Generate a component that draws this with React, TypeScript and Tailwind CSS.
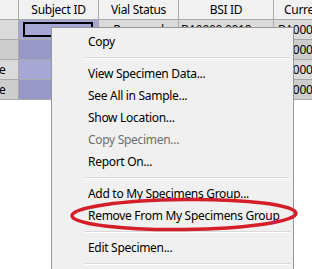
import React from "react";

const font = { fontFamily: '"Noto Sans", "Open Sans", sans-serif' };

function HeaderCell({ w, children, last }: { w: string; children?: React.ReactNode; last?: boolean }) {
  return (
    <div
      className={`${w} h-full flex items-center bg-[#f1f1f1] shrink-0 overflow-hidden whitespace-nowrap ${last ? "justify-start pl-[10px]" : "justify-center border-r border-[#a9a9a9]"}`}
    >
      {children}
    </div>
  );
}

const rows = [
  { first: "", vial: "Removed", bsi: "BA0000 0018", cur: "BA0000", light: true },
  { first: "", vial: "", bsi: "", cur: "BA0000", light: false },
  { first: "e", vial: "", bsi: "", cur: "BA0003", light: true },
  { first: "e", vial: "", bsi: "", cur: "BA0006", light: false },
];

function MenuItem({ children, disabled }: { children: React.ReactNode; disabled?: boolean }) {
  return (
    <div className={`h-[22px] flex items-center pl-[36px] whitespace-nowrap ${disabled ? "text-[#6d6d6d]" : "text-black"}`}>
      {children}
    </div>
  );
}

function Sep() {
  return (
    <div className="h-[10px] flex flex-col justify-center pl-[33px] pr-[3px]">
      <div className="h-px bg-[#d9d9d9]" />
      <div className="h-px bg-white" />
    </div>
  );
}

export default function App() {
  return (
    <div className="w-[312px] h-[269px] relative overflow-hidden bg-white text-[12px] tracking-[-0.3px] text-black" style={font}>
      {/* header */}
      <div className="flex h-[20px] border-b border-[#a9a9a9] w-[312px] overflow-hidden">
        <HeaderCell w="w-[19px]" />
        <HeaderCell w="w-[80px]">Subject ID</HeaderCell>
        <HeaderCell w="w-[80px]">Vial Status</HeaderCell>
        <HeaderCell w="w-[95px]">BSI ID</HeaderCell>
        <HeaderCell w="w-[38px]" last>Curre</HeaderCell>
      </div>
      {/* rows */}
      {rows.map((r, i) => (
        <div key={i} className="flex h-[20px] border-b border-[#a9a9a9] w-[312px] overflow-hidden">
          <div className={`w-[19px] shrink-0 border-r border-[#a9a9a9] flex items-center overflow-hidden ${r.light ? "bg-[#dadada]" : "bg-[#cdcdcd]"}`}>
            <span className="-ml-[1px]">{r.first}</span>
          </div>
          <div className={`w-[80px] shrink-0 border-r border-[#a9a9a9] relative ${r.light ? "bg-[#a7a7d6]" : "bg-[#9898c8]"}`}>
            {i === 0 && <div className="absolute top-[2px] left-[4px] right-[5px] bottom-[2px] border-2 border-black" />}
          </div>
          <div className={`w-[80px] shrink-0 border-r border-[#a9a9a9] flex items-center justify-center ${r.light ? "bg-[#dadada]" : "bg-[#cdcdcd]"}`}>
            {r.vial}
          </div>
          <div className={`w-[95px] shrink-0 border-r border-[#a9a9a9] flex items-center pl-[2px] ${r.light ? "bg-[#dadada]" : "bg-[#cdcdcd]"}`}>
            {r.bsi}
          </div>
          <div className={`w-[38px] shrink-0 flex items-center pl-[4px] overflow-hidden whitespace-nowrap ${r.light ? "bg-[#dadada]" : "bg-[#cdcdcd]"}`}>
            {r.cur}
          </div>
        </div>
      ))}

      {/* context menu */}
      <div className="absolute left-[51px] top-[27px] w-[243px] h-[260px] bg-[#f0f0f0] border border-[#979797] pt-[3px]">
        <MenuItem>Copy</MenuItem>
        <Sep />
        <MenuItem>View Specimen Data...</MenuItem>
        <MenuItem>See All in Sample...</MenuItem>
        <MenuItem>Show Location...</MenuItem>
        <MenuItem disabled>Copy Specimen...</MenuItem>
        <MenuItem>Report On...</MenuItem>
        <Sep />
        <MenuItem>Add to My Specimens Group...</MenuItem>
        <MenuItem>Remove From My Specimens Group</MenuItem>
        <Sep />
        <MenuItem>Edit Specimen...</MenuItem>
        <Sep />
      </div>

      {/* red annotation ellipse */}
      <svg className="absolute left-0 top-0 pointer-events-none" width="312" height="269">
        <ellipse cx="184" cy="214.5" rx="112" ry="15" fill="none" stroke="#d41f2a" strokeWidth="3.5" transform="rotate(-0.6 184 214.5)" />
      </svg>
    </div>
  );
}
